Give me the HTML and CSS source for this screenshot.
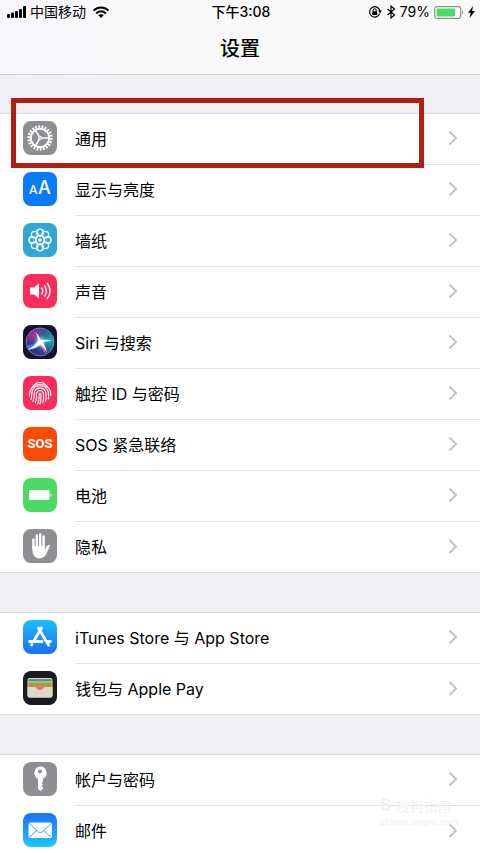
FILE: index.html
```html
<!DOCTYPE html>
<html lang="zh-CN">
    <head>
        <meta charset="UTF-8">
        <meta name="viewport" content="width=device-width, initial-scale=1.0">
        <title>设置</title>
        <link rel="stylesheet" href="styles.css">
    </head>
    <body>
        <header class="header">
            <div class="status">
                <div class="status-left">
                    <svg width="20" height="12" viewBox="0 0 20 12">
                        <rect x="0" y="8" width="3" height="4" rx="1"/>
                        <rect x="4" y="6.500" width="3" height="5.500" rx="1"/>
                        <rect x="8" y="5" width="3" height="7" rx="1"/>
                        <rect x="12" y="3" width="3" height="9" rx="1"/>
                        <rect x="16" y="0" width="3" height="12" rx="1"/>
                    </svg>
                    <span>中国移动</span>
                    <svg class="wifi" width="18" height="12" viewBox="0 0 18 12">
                        <path d="M1.500 4.600C6 .4 12 .4 16.500 4.600M4.200 7.400c2.900-2.600 6.700-2.600 9.600 0" fill="none" stroke="#000" stroke-width="2.100"/>
                        <path d="M6.200 9.100c1.700-1.300 3.900-1.300 5.600 0L9 12z"/>
                    </svg>
                </div>
                <div class="time">下午3:08</div>
                <div class="status-right">
                    <svg width="14" height="14" viewBox="0 0 14 14">
                        <path d="M11.700 8.600A5.200 5.200 0 1 1 11.900 5.800" fill="none" stroke="#000" stroke-width="1.200"/>
                        <path d="M10.200 5.600h3.800l-1.900 2.800z"/>
                        <rect x="4.200" y="6.300" width="5" height="3.700" rx=".5"/>
                        <path d="M5.200 6.500V5.200a1.500 1.500 0 0 1 3 0v1.300" fill="none" stroke="#000"/>
                    </svg>
                    <svg width="10" height="14" viewBox="0 0 10 14">
                        <path d="M1.500 4l7 6L5 13V1l3.500 3-7 6" fill="none" stroke="#000" stroke-width="1.200"/>
                    </svg>
                    <span>79%</span>
                    <svg width="30" height="13" viewBox="0 0 30 13">
                        <rect x=".7" y=".7" width="26" height="11.600" rx="2.500" fill="#fff" stroke="#8e8e8e" stroke-width="1.200"/>
                        <rect x="2.500" y="2.500" width="18.500" height="8" rx="1" fill="#4cd964"/>
                        <path d="M28.200 4.500c1.400.6 1.400 3.400 0 4z" fill="#8e8e8e"/>
                    </svg>
                    <svg width="7" height="12" viewBox="0 0 7 12">
                        <path d="M5 0L0 6.700h2.700L1.600 12 7 5H4.200z"/>
                    </svg>
                </div>
            </div>
            <h1 class="title">设置</h1>
        </header>

        <main>
            <nav class="list">
                <div class="highlight"></div>
                <a class="row" href="#">
                    <svg class="icon gray" viewBox="0 0 34 34">
                        <g fill="none" stroke="#fff">
                            <circle cx="17" cy="17" r="11.200" stroke-width="3" pathLength="44" stroke-dasharray="1.100 .9"/>
                            <circle cx="17" cy="17" r="9.200" stroke-width="2"/>
                            <path d="M17 17h9M17 17l-4.500-7.800M17 17l-4.500 7.800" stroke-width="1.600"/>
                        </g>
                        <circle cx="17" cy="17" r="2" fill="#fff"/>
                        <circle cx="17" cy="17" r=".8" fill="#8e8e93"/>
                    </svg>
                    <span class="label">通用</span>
                    <svg class="arrow" viewBox="0 0 10 16"><path d="M1.500 1.500L8 8l-6.500 6.500"/></svg>
                </a>
                <a class="row" href="#">
                    <svg class="icon blue" viewBox="0 0 34 34">
                        <text class="glyph" x="6" y="22" font-size="12">A</text>
                        <text class="glyph" x="15" y="22" font-size="18">A</text>
                    </svg>
                    <span class="label">显示与亮度</span>
                    <svg class="arrow" viewBox="0 0 10 16"><path d="M1.500 1.500L8 8l-6.500 6.500"/></svg>
                </a>
                <a class="row" href="#">
                    <svg class="icon cyan" viewBox="0 0 34 34">
                        <g fill="none" stroke="#fff" stroke-width="1.300">
                            <circle cx="17" cy="9.500" r="3.400"/>
                            <circle cx="22.300" cy="11.700" r="3.400"/>
                            <circle cx="24.500" cy="17" r="3.400"/>
                            <circle cx="22.300" cy="22.300" r="3.400"/>
                            <circle cx="17" cy="24.500" r="3.400"/>
                            <circle cx="11.700" cy="22.300" r="3.400"/>
                            <circle cx="9.500" cy="17" r="3.400"/>
                            <circle cx="11.700" cy="11.700" r="3.400"/>
                            <circle cx="17" cy="17" r="4.500"/>
                        </g>
                        <circle cx="17" cy="17" r="1.800" fill="#fff"/>
                    </svg>
                    <span class="label">墙纸</span>
                    <svg class="arrow" viewBox="0 0 10 16"><path d="M1.500 1.500L8 8l-6.500 6.500"/></svg>
                </a>
                <a class="row" href="#">
                    <svg class="icon pink" viewBox="0 0 34 34">
                        <path d="M7 13.500h4l5-4v15l-5-4H7z" fill="#fff"/>
                        <path d="M18.500 13.500q2.600 3.500 0 7M21.300 11.300q4.300 5.700 0 11.400M24 9q6.200 8 0 16" fill="none" stroke="#fff" stroke-width="1.400"/>
                    </svg>
                    <span class="label">声音</span>
                    <svg class="arrow" viewBox="0 0 10 16"><path d="M1.500 1.500L8 8l-6.500 6.500"/></svg>
                </a>
                <a class="row" href="#">
                    <svg class="icon siri" viewBox="0 0 34 34">
                        <defs>
                            <radialGradient id="siriPink" cx=".3" cy=".25" r=".6">
                                <stop offset="0" stop-color="#b23a9c"/>
                                <stop offset="1" stop-color="#5a2f8c" stop-opacity="0"/>
                            </radialGradient>
                            <radialGradient id="siriTeal" cx=".85" cy=".45" r=".6">
                                <stop offset="0" stop-color="#18b6a6"/>
                                <stop offset="1" stop-color="#1a7fa8" stop-opacity="0"/>
                            </radialGradient>
                            <radialGradient id="siriGlow">
                                <stop offset="0" stop-color="#fff"/>
                                <stop offset=".4" stop-color="#bff3fa" stop-opacity=".6"/>
                                <stop offset="1" stop-color="#5ac8fa" stop-opacity="0"/>
                            </radialGradient>
                        </defs>
                        <circle cx="17" cy="17" r="14" fill="#293a87"/>
                        <circle cx="17" cy="17" r="14" fill="url(#siriPink)"/>
                        <circle cx="17" cy="17" r="14" fill="url(#siriTeal)"/>
                        <circle cx="17" cy="17" r="14" fill="none" stroke="#9a93c9" stroke-width=".7"/>
                        <path d="M4 21c5-1 8-3 12-5l2 3c-3 4-7 5-13 5z" fill="#3994e6" opacity=".8"/>
                        <path d="M18 18c3 3 5 7 5 11l-7-9z" fill="#ed4f9c"/>
                        <circle cx="17.500" cy="17" r="7" fill="url(#siriGlow)"/>
                        <path d="M12.500 7c2.500 2.500 4 5 5 8 4-.5 8-.5 12 1-4 0-7 .5-9.500 1.500 2 3 3.500 6.500 4 10-2-3.500-4-6-6.500-8-3 2.500-7.500 5-12.500 5 4-2 7.500-5 10-8.500-.5-3-1-6-2.500-9z" fill="#fff" opacity=".9"/>
                    </svg>
                    <span class="label">Siri 与搜索</span>
                    <svg class="arrow" viewBox="0 0 10 16"><path d="M1.500 1.500L8 8l-6.500 6.500"/></svg>
                </a>
                <a class="row" href="#">
                    <svg class="icon pink" viewBox="0 0 34 34">
                        <g fill="none" stroke="#fff" stroke-width="1.100" stroke-linecap="round">
                            <path d="M9 11.500C13 4.800 21 4.800 25 11.500"/>
                            <path d="M6.500 20C5.500 4.500 28.500 4.500 27.800 19.500"/>
                            <path d="M8 23.500C8.800 21 8.500 19 8.800 17 10 7.300 24 7.300 25.400 17c.3 2 .2 4-.1 6"/>
                            <path d="M10 25.500c1.500-4 .8-6 1.200-8.500 1.300-6.500 10.400-6.500 11.700 0 .4 2.500.3 6-.4 8.500"/>
                            <path d="M12.300 27c1.500-4 1-7 1.300-9.500.8-4 6-4 6.900 0 .3 3 .1 6.500-.8 9.500"/>
                            <path d="M14.800 28c1.500-4 1.400-7 1.400-9.500.2-1.500 1.600-1.500 1.800 0 .2 4-.1 6.500-1 9.500"/>
                        </g>
                    </svg>
                    <span class="label">触控 ID 与密码</span>
                    <svg class="arrow" viewBox="0 0 10 16"><path d="M1.500 1.500L8 8l-6.500 6.500"/></svg>
                </a>
                <a class="row" href="#">
                    <span class="icon orange">SOS</span>
                    <span class="label">SOS 紧急联络</span>
                    <svg class="arrow" viewBox="0 0 10 16"><path d="M1.500 1.500L8 8l-6.500 6.500"/></svg>
                </a>
                <a class="row" href="#">
                    <svg class="icon green" viewBox="0 0 34 34">
                        <rect x="6" y="12" width="20.500" height="10" rx="1" fill="#fff"/>
                        <path d="M27.500 15q2 2 0 4z" fill="#fff"/>
                    </svg>
                    <span class="label">电池</span>
                    <svg class="arrow" viewBox="0 0 10 16"><path d="M1.500 1.500L8 8l-6.500 6.500"/></svg>
                </a>
                <a class="row" href="#">
                    <svg class="icon gray" viewBox="0 0 34 34">
                        <path d="M10.400 19V10.500M13.800 18V6.500M17.200 18V5.500M20.600 18V7.500" fill="none" stroke="#fff" stroke-width="2.400" stroke-linecap="round"/>
                        <path d="M9.200 17h12.600v3.500c1.200-1.500 2-3.700 3.300-4.400.9-.5 2.200 0 1.700 1.200-1.200 2.700-2.600 6.500-4.800 9.500-2.800 3.800-8.900 3.500-11.200-.3-1.400-2.300-1.600-5.500-1.600-9.500z" fill="#fff"/>
                    </svg>
                    <span class="label">隐私</span>
                    <svg class="arrow" viewBox="0 0 10 16"><path d="M1.500 1.500L8 8l-6.500 6.500"/></svg>
                </a>
            </nav>

            <nav class="list">
                <a class="row" href="#">
                    <svg class="icon store" viewBox="0 0 34 34">
                        <g fill="none" stroke="#fff" stroke-width="2.800" stroke-linecap="round">
                            <path d="M18.500 8L10.500 21.500M8.900 24.400l-.4.700M15.400 8l10.200 17.300M6.500 21.500h12.500M23.500 21.500h4"/>
                        </g>
                    </svg>
                    <span class="label">iTunes Store 与 App Store</span>
                    <svg class="arrow" viewBox="0 0 10 16"><path d="M1.500 1.500L8 8l-6.500 6.500"/></svg>
                </a>
                <a class="row" href="#">
                    <svg class="icon black" viewBox="0 0 34 34">
                        <rect x="4.500" y="7" width="25" height="19.500" rx="2" fill="#ddd8ca"/>
                        <rect x="5.500" y="8" width="23" height="4" rx="1" fill="#4597b8"/>
                        <rect x="5.500" y="10" width="23" height="4" rx="1" fill="#e0ae38"/>
                        <rect x="5.500" y="12" width="23" height="4" rx="1" fill="#78a852"/>
                        <path d="M5.500 14.500h23v5h-23z" fill="#e5775f"/>
                        <path d="M4.500 16h7.500c1.500 0 1.500 3 5 3s3.500-3 5-3h7.500v8.500a2 2 0 0 1-2 2h-21a2 2 0 0 1-2-2z" fill="#ddd8ca"/>
                    </svg>
                    <span class="label">钱包与 Apple Pay</span>
                    <svg class="arrow" viewBox="0 0 10 16"><path d="M1.500 1.500L8 8l-6.500 6.500"/></svg>
                </a>
            </nav>

            <nav class="list">
                <a class="row" href="#">
                    <svg class="icon gray" viewBox="0 0 34 34">
                        <path fill="#fff" fill-rule="evenodd" d="M17 4.500a6.500 6.500 0 0 1 3 12.300v2.700l-1.500 1.500 1.500 1.500-1.500 1.500 1.500 1.500v1.300L17.500 29 15 27V16.800a6.500 6.500 0 0 1 2-12.300zM17 7.500a2 2 0 1 0 0 4 2 2 0 0 0 0-4z"/>
                    </svg>
                    <span class="label">帐户与密码</span>
                    <svg class="arrow" viewBox="0 0 10 16"><path d="M1.500 1.500L8 8l-6.500 6.500"/></svg>
                </a>
                <a class="row" href="#">
                    <svg class="icon mail" viewBox="0 0 34 34">
                        <rect x="5.500" y="9.500" width="23.500" height="15.500" rx="1.500" fill="#fff"/>
                        <path d="M6 10l9.500 9q1.800 1.500 3.600 0L28.500 10M6 24.500l7.800-7M28.500 24.500l-7.800-7" fill="none" stroke="#3ca0ee" stroke-width="1"/>
                    </svg>
                    <span class="label">邮件</span>
                    <svg class="arrow" viewBox="0 0 10 16"><path d="M1.500 1.500L8 8l-6.500 6.500"/></svg>
                </a>
                <div class="mark">
                    <div class="mark-name"><b>S</b>搜狗指南</div>
                    <div class="mark-url">zhinan.sogou.com</div>
                </div>
            </nav>
        </main>
    </body>
</html>
```
FILE: styles.css
```css
*{
    margin: 0;
    padding: 0;
    box-sizing: border-box;
}
html{
    scrollbar-width: none;
}
body{
    background-color: #efeff4;
    color: #000;
    font-family: Inter, "Noto Sans CJK SC", sans-serif;
    font-size: 16px;
}
.header{
    height: 75px;
    background: linear-gradient(to right, #f6f6fc, #f9f9f9 30%);
    border-bottom: 1px solid #cfcfd2;
}
.status{
    display: grid;
    grid-template-columns: 1fr auto 1fr;
    align-items: center;
    height: 24px;
    padding: 0 5px 0 7px;
    font-size: 14px;
    line-height: 24px;
}
.status-left,
.status-right{
    display: flex;
    align-items: center;
    gap: 3px;
}
.status-right{
    justify-content: flex-end;
    gap: 4px;
}
.wifi{
    margin-left: 3px;
}
.time{
    font-weight: 500;
}
.title{
    font-size: 20px;
    font-weight: 500;
    line-height: 50px;
    text-align: center;
}
.list{
    position: relative;
    margin-top: 40px;
    background-color: #fff;
    box-shadow: 0 -1px #dcdce0;
}
.list:first-child{
    margin-top: 39px;
}
.row{
    display: flex;
    align-items: center;
    height: 51px;
    padding-left: 23px;
    color: inherit;
    text-decoration: none;
}
.row:last-of-type{
    border-bottom: 1px solid #dcdce0;
}
.icon{
    width: 34px;
    height: 34px;
    margin: 0 18px 3px 0;
    border-radius: 8px;
    flex-shrink: 0;
}
.label{
    flex: 1;
    line-height: 50px;
    border-bottom: 1px solid #e2e2e5;
}
.arrow{
    width: 32px;
    height: 51px;
    padding: 16px 22px 18px 0;
    border-bottom: 1px solid #e2e2e5;
    fill: none;
    stroke: #c3c3c8;
    stroke-width: 2;
}
.row:last-of-type .label,
.row:last-of-type .arrow{
    border-bottom: 0;
}
.gray{
    background-color: #8e8e93;
}
.blue{
    background-color: #087bfa;
}
.cyan{
    background-color: #34a6d5;
}
.pink{
    background-color: #fb2e59;
}
.siri{
    background-color: #15132b;
}
.orange{
    background-color: #fc4a08;
    color: #fff;
    font-family: Roboto, sans-serif;
    font-size: 13px;
    font-weight: 700;
    line-height: 34px;
    text-align: center;
}
.green{
    background-color: #4cd964;
}
.store{
    background: linear-gradient(#1bbdfa, #1a70ee);
}
.black{
    background-color: #1c1c1e;
}
.mail{
    background: linear-gradient(#1d70f2, #1bc8fb);
}
.glyph{
    fill: #fff;
    font-family: Inter, sans-serif;
    font-weight: 500;
}
/* red frame round the first row */
.highlight{
    position: absolute;
    top: -16px;
    left: 11px;
    right: 56px;
    height: 70px;
    border: 5px solid #b11e13;
    pointer-events: none;
}
.mark{
    position: absolute;
    top: 42px;
    right: 22px;
    color: #f2f2f2;
    line-height: 16px;
    pointer-events: none;
}
.mark-name{
    font-size: 14px;
}
.mark-name b{
    font-size: 18px;
    margin-right: 4px;
}
.mark-url{
    font-size: 9px;
}
```
